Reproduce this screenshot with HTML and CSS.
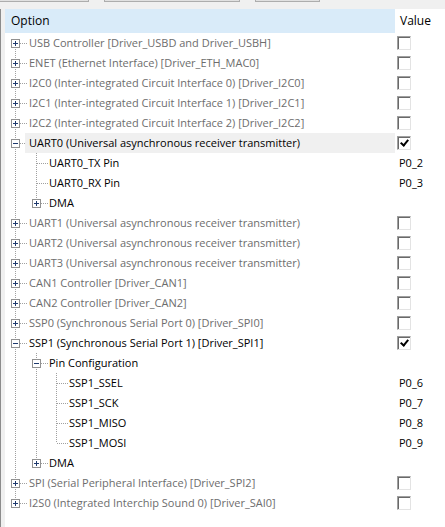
FILE: index.html
```html
<!DOCTYPE html>
<html>
<head>
<meta charset="utf-8">
<link rel="stylesheet" href="styles.css">
</head>
<body>
<div class="toolbar">
  <span class="btn b1"></span>
  <span class="btn b2"></span>
  <span class="btn b3"></span>
</div>
<div class="frame">
  <div class="tree">
    <div class="head">
      <div class="h-opt">Option</div>
      <div class="h-val">Value</div>
    </div>

    <div class="row dim"><span class="c c0 f"><i class="box plus"></i></span><span class="lbl">USB Controller [Driver_USBD and Driver_USBH]</span><span class="val"><i class="chk"></i></span></div>
    <div class="row dim"><span class="c c0 t"><i class="box plus"></i></span><span class="lbl">ENET (Ethernet Interface) [Driver_ETH_MAC0]</span><span class="val"><i class="chk"></i></span></div>
    <div class="row dim"><span class="c c0 t"><i class="box plus"></i></span><span class="lbl">I2C0 (Inter-integrated Circuit Interface 0) [Driver_I2C0]</span><span class="val"><i class="chk"></i></span></div>
    <div class="row dim"><span class="c c0 t"><i class="box plus"></i></span><span class="lbl">I2C1 (Inter-integrated Circuit Interface 1) [Driver_I2C1]</span><span class="val"><i class="chk"></i></span></div>
    <div class="row dim"><span class="c c0 t"><i class="box plus"></i></span><span class="lbl">I2C2 (Inter-integrated Circuit Interface 2) [Driver_I2C2]</span><span class="val"><i class="chk"></i></span></div>
    <div class="row sel"><span class="c c0 t"><i class="box minus"></i></span><span class="lbl">UART0 (Universal asynchronous receiver transmitter)</span><span class="val"><i class="chk on"></i></span></div>
    <div class="row"><span class="c c0 v"></span><span class="c t"></span><span class="lbl">UART0_TX Pin</span><span class="val txt">P0_2</span></div>
    <div class="row"><span class="c c0 v"></span><span class="c t"></span><span class="lbl">UART0_RX Pin</span><span class="val txt">P0_3</span></div>
    <div class="row"><span class="c c0 v"></span><span class="c l"><i class="box plus"></i></span><span class="lbl">DMA</span><span class="val"></span></div>
    <div class="row dim"><span class="c c0 t"><i class="box plus"></i></span><span class="lbl">UART1 (Universal asynchronous receiver transmitter)</span><span class="val"><i class="chk"></i></span></div>
    <div class="row dim"><span class="c c0 t"><i class="box plus"></i></span><span class="lbl">UART2 (Universal asynchronous receiver transmitter)</span><span class="val"><i class="chk"></i></span></div>
    <div class="row dim"><span class="c c0 t"><i class="box plus"></i></span><span class="lbl">UART3 (Universal asynchronous receiver transmitter)</span><span class="val"><i class="chk"></i></span></div>
    <div class="row dim"><span class="c c0 t"><i class="box plus"></i></span><span class="lbl">CAN1 Controller [Driver_CAN1]</span><span class="val"><i class="chk"></i></span></div>
    <div class="row dim"><span class="c c0 t"><i class="box plus"></i></span><span class="lbl">CAN2 Controller [Driver_CAN2]</span><span class="val"><i class="chk"></i></span></div>
    <div class="row dim"><span class="c c0 t"><i class="box plus"></i></span><span class="lbl">SSP0 (Synchronous Serial Port 0) [Driver_SPI0]</span><span class="val"><i class="chk"></i></span></div>
    <div class="row"><span class="c c0 t"><i class="box minus"></i></span><span class="lbl">SSP1 (Synchronous Serial Port 1) [Driver_SPI1]</span><span class="val"><i class="chk on"></i></span></div>
    <div class="row"><span class="c c0 v"></span><span class="c t"><i class="box minus"></i></span><span class="lbl">Pin Configuration</span><span class="val"></span></div>
    <div class="row"><span class="c c0 v"></span><span class="c v"></span><span class="c t"></span><span class="lbl">SSP1_SSEL</span><span class="val txt">P0_6</span></div>
    <div class="row"><span class="c c0 v"></span><span class="c v"></span><span class="c t"></span><span class="lbl">SSP1_SCK</span><span class="val txt">P0_7</span></div>
    <div class="row"><span class="c c0 v"></span><span class="c v"></span><span class="c t"></span><span class="lbl">SSP1_MISO</span><span class="val txt">P0_8</span></div>
    <div class="row"><span class="c c0 v"></span><span class="c v"></span><span class="c l"></span><span class="lbl">SSP1_MOSI</span><span class="val txt">P0_9</span></div>
    <div class="row"><span class="c c0 v"></span><span class="c l"><i class="box plus"></i></span><span class="lbl">DMA</span><span class="val"></span></div>
    <div class="row dim"><span class="c c0 t"><i class="box plus"></i></span><span class="lbl">SPI (Serial Peripheral Interface) [Driver_SPI2]</span><span class="val"><i class="chk"></i></span></div>
    <div class="row dim"><span class="c c0 l"><i class="box plus"></i></span><span class="lbl">I2S0 (Integrated Interchip Sound 0) [Driver_SAI0]</span><span class="val"><i class="chk"></i></span></div>
  </div>
</div>
</body>
</html>
```

FILE: styles.css
```css
* { box-sizing: border-box; }
html, body { margin: 0; padding: 0; }
body {
  width: 445px;
  height: 527px;
  overflow: hidden;
  background: #f0f0f0;
  font-family: "Open Sans", "Noto Sans", sans-serif;
  font-size: 11px;
  color: #000;
}
.toolbar {
  height: 9px;
  display: flex;
  gap: 15px;
  align-items: flex-start;
}
.btn {
  display: block;
  height: 2px;
  background: #e1e1e1;
  border: 1px solid #adadad;
  border-top: none;
}
.b1 { width: 89px; border-left: none; }
.b2 { width: 136px; }
.b3 { width: 65px; }

.frame {
  height: 518px;
  border-left: 1px solid #8c8c8c;
  padding-left: 4px;
}
.tree {
  height: 100%;
  background: #fff;
  overflow: hidden;
}
.head {
  display: flex;
  height: 24px;
}
.h-opt {
  width: 390px;
  background: #d9ebf9;
  padding-left: 6px;
  line-height: 24px;
  font-size: 12px;
}
.h-val {
  flex: 1;
  padding-left: 5px;
  line-height: 24px;
  font-size: 12px;
}
.row {
  display: flex;
  height: 20px;
  align-items: stretch;
}
.row.dim .lbl { color: #6d6d6d; }
.c {
  position: relative;
  width: 20px;
  flex: none;
}
.c::before, .c::after {
  content: "";
  position: absolute;
}
/* vertical dotted line */
.c.v::before, .c.t::before, .c.l::before, .c.f::before {
  left: 11px;
  width: 1px;
  top: 0;
  bottom: 0;
  background-image: linear-gradient(to bottom, #a0a0a0 50%, transparent 50%);
  background-size: 1px 2px;
}
.c0.v::before, .c0.t::before, .c0.l::before, .c0.f::before { left: 10px; }
.c.l::before { bottom: 10px; }
.c.f::before { top: 10px; }
/* horizontal dotted line */
.c.t::after, .c.l::after, .c.f::after {
  left: 12px;
  right: -3px;
  top: 10px;
  height: 1px;
  background-image: linear-gradient(to right, #a0a0a0 50%, transparent 50%);
  background-size: 2px 1px;
}
.c0.t::after, .c0.l::after, .c0.f::after { left: 11px; }
.box {
  position: absolute;
  left: 7px;
  top: 6px;
  width: 9px;
  height: 9px;
  border: 1px solid #919191;
  background: #fff;
  z-index: 2;
}
.c0 .box { left: 6px; }
.box::before, .box::after {
  content: "";
  position: absolute;
  background: #1e3a6e;
}
.box::before { left: 1px; top: 3px; width: 5px; height: 1px; }
.plus::after { left: 3px; top: 1px; width: 1px; height: 5px; }
.lbl {
  position: relative;
  flex: 1;
  min-width: 0;
  padding-left: 4px;
  line-height: 20px;
  white-space: nowrap;
  overflow: hidden;
}
.row.sel .lbl { background: #f0f0f0; }
.val {
  width: 50px;
  flex: none;
  display: flex;
  align-items: center;
  padding-left: 2px;
}
.val.txt { padding-left: 4px; line-height: 20px; }
.chk {
  display: block;
  position: relative;
  width: 14px;
  height: 14px;
  border: 1px solid;
  border-color: #a0a0a0 #e3e3e3 #e3e3e3 #a0a0a0;
  box-shadow: inset 1px 1px 0 #696969;
  background: #fff;
}
.chk.on::after {
  content: "";
  position: absolute;
  left: 4px;
  top: 1px;
  width: 3px;
  height: 6px;
  border: solid #000;
  border-width: 0 2px 2px 0;
  transform: rotate(40deg);
}
```
